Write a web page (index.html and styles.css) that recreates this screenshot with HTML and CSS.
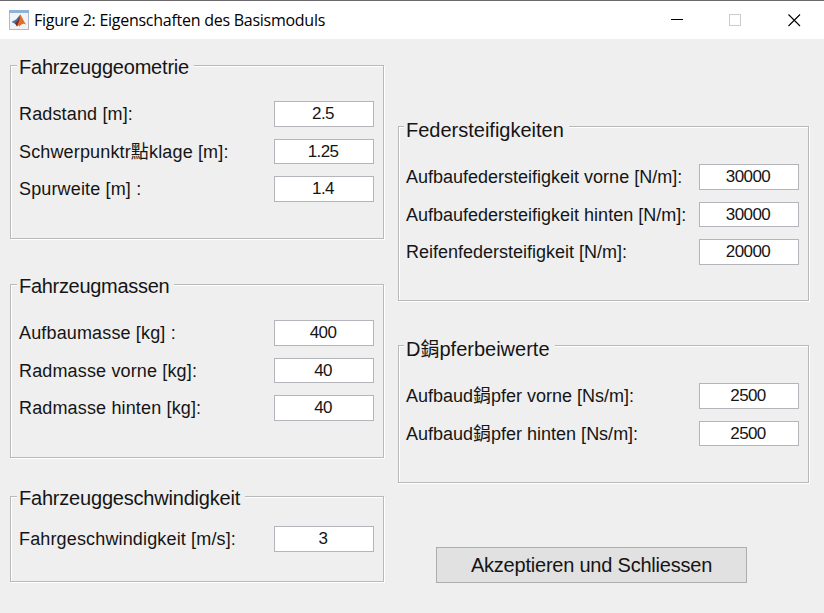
FILE: index.html
```html
<!DOCTYPE html>
<html lang="de">
<head>
<meta charset="utf-8">
<title>Figure 2: Eigenschaften des Basismoduls</title>
<link rel="stylesheet" href="styles.css">
</head>
<body>
<header class="titlebar">
  <svg class="logo" width="20" height="20" viewBox="0 0 20 20">
    <rect x=".5" y=".5" width="19" height="19" fill="#f1f3f6" stroke="#b3b9c3"/>
    <rect x="0" y="0" width="20" height="3" fill="#8fb2d6"/>
    <path d="M2.500 12 7 9.500 10 6 11 9 7.500 14.500 5.500 13.500Z" fill="#3e78ad"/>
    <path d="M6 13.500 9 10 11 4.500 13 9 10.500 13.500 8 16.500Z" fill="#7d2b20"/>
    <path d="M11 4.500C13 5.500 14.500 12 17.500 14.500 14.500 13 12.500 13.500 10.500 16.500 9.500 16 9.500 14.500 8.500 14.500 10.500 11.500 10.700 8 11 4.500Z" fill="#df702b"/>
  </svg>
  <h1 class="caption"><span>Figure 2: Eigenschaften des Basismoduls</span></h1>
  <svg class="controls" width="132" height="14" viewBox="0 0 132 14">
    <path d="M0 6.500H12" stroke="#000"/>
    <rect x="58.500" y="1.500" width="11" height="11" fill="none" stroke="#ccc"/>
    <path d="M117.500 1.500 129 13M129 1.500 117.500 13" stroke="#000" stroke-width="1.100"/>
  </svg>
</header>
<main class="figure">
  <div class="column left">
    <section class="panel">
      <h2 class="title"><span>Fahrzeuggeometrie</span></h2>
      <label class="row"><span>Radstand [m]:</span><b class="field">2.5</b></label>
      <label class="row"><span>Schwerpunktr<i class="han">點</i>klage [m]:</span><b class="field">1.25</b></label>
      <label class="row"><span>Spurweite [m] :</span><b class="field">1.4</b></label>
    </section>
    <section class="panel masses">
      <h2 class="title"><span>Fahrzeugmassen</span></h2>
      <label class="row"><span>Aufbaumasse [kg] :</span><b class="field">400</b></label>
      <label class="row"><span>Radmasse vorne [kg]:</span><b class="field">40</b></label>
      <label class="row"><span>Radmasse hinten [kg]:</span><b class="field">40</b></label>
    </section>
    <section class="panel speed">
      <h2 class="title"><span>Fahrzeuggeschwindigkeit</span></h2>
      <label class="row"><span>Fahrgeschwindigkeit [m/s]:</span><b class="field">3</b></label>
    </section>
  </div>
  <div class="column right">
    <section class="panel springs">
      <h2 class="title"><span>Federsteifigkeiten</span></h2>
      <label class="row"><span>Aufbaufedersteifigkeit vorne [N/m]:</span><b class="field">30000</b></label>
      <label class="row"><span>Aufbaufedersteifigkeit hinten [N/m]:</span><b class="field">30000</b></label>
      <label class="row"><span>Reifenfedersteifigkeit [N/m]:</span><b class="field">20000</b></label>
    </section>
    <section class="panel dampers">
      <h2 class="title"><span>D<i class="han">鋗</i>pferbeiwerte</span></h2>
      <label class="row"><span>Aufbaud<i class="han">鋗</i>pfer vorne [Ns/m]:</span><b class="field">2500</b></label>
      <label class="row"><span>Aufbaud<i class="han">鋗</i>pfer hinten [Ns/m]:</span><b class="field">2500</b></label>
    </section>
    <button class="accept" type="button"><span>Akzeptieren und Schliessen</span></button>
  </div>
</main>
</body>
</html>
```
FILE: styles.css
```css
* { box-sizing: border-box; }
body {
  margin: 0;
  width: 824px;
  height: 613px;
  overflow: hidden;
  background: #efefef;
  color: #151515;
  font-family: "Liberation Sans", "Noto Sans CJK TC", sans-serif;
}
.titlebar {
  display: flex;
  align-items: center;
  height: 39px;
  padding: 0 21px 0 9px;
  background: #fff;
  border-top: 1px solid #6b696b;
}
.logo { margin-top: -1px; }
.caption {
  flex: 1;
  margin: -1px 0 0 5px;
  color: #000;
  font: 400 16px/20px "Open Sans", sans-serif;
  letter-spacing: -0.26px;
}
.figure {
  display: flex;
  gap: 14px;
  padding-left: 10px;
}
.column { display: flex; flex-direction: column; }
.left { width: 374px; padding-top: 26px; }
.right { width: 411px; padding-top: 87px; }
.panel {
  height: 174px;
  border: 1px solid #b9b9b9;
  box-shadow: inset 1px 1px #fff, 1px 1px #fff;
  padding: 0 9px 0 8px;
}
.masses { margin-top: 45px; }
.speed { height: 86px; margin-top: 38px; }
.springs { height: 175px; }
.dampers { height: 138px; margin-top: 44px; }
.right .panel { padding-left: 7px; }
.title {
  width: max-content;
  height: 24px;
  margin: -11px 0 22px -2px;
  padding: 0 5px 0 2px;
  background: #efefef;
  font-size: 20px;
  font-weight: 400;
  line-height: 25px;
  letter-spacing: -0.2px;
}
.masses .title { letter-spacing: -0.3px; }
.speed .title { margin-bottom: 16px; }
.right .title { margin-top: -9px; letter-spacing: 0; }
.row {
  display: flex;
  justify-content: space-between;
  align-items: flex-start;
  height: 37.5px;
  font-size: 18px;
  line-height: 26px;
  letter-spacing: 0.15px;
  white-space: nowrap;
}
.right .row { letter-spacing: 0; }
.field {
  width: 100px;
  height: 25.5px;
  background: #fff;
  border: 1px solid #b4b4bb;
  font-size: 17px;
  font-weight: 400;
  line-height: 23px;
  letter-spacing: -0.6px;
  text-align: center;
  padding-right: 2px;
}
.han { font-style: normal; }
.title .han { font-size: 19px; line-height: 1; }
.accept {
  width: 311px;
  height: 36px;
  margin: 64px 0 0 38px;
  padding: 0;
  background: #e1e1e1;
  border: 1px solid #adadad;
  color: #151515;
  font: 20px "Liberation Sans", sans-serif;
  letter-spacing: -0.22px;
}
```
